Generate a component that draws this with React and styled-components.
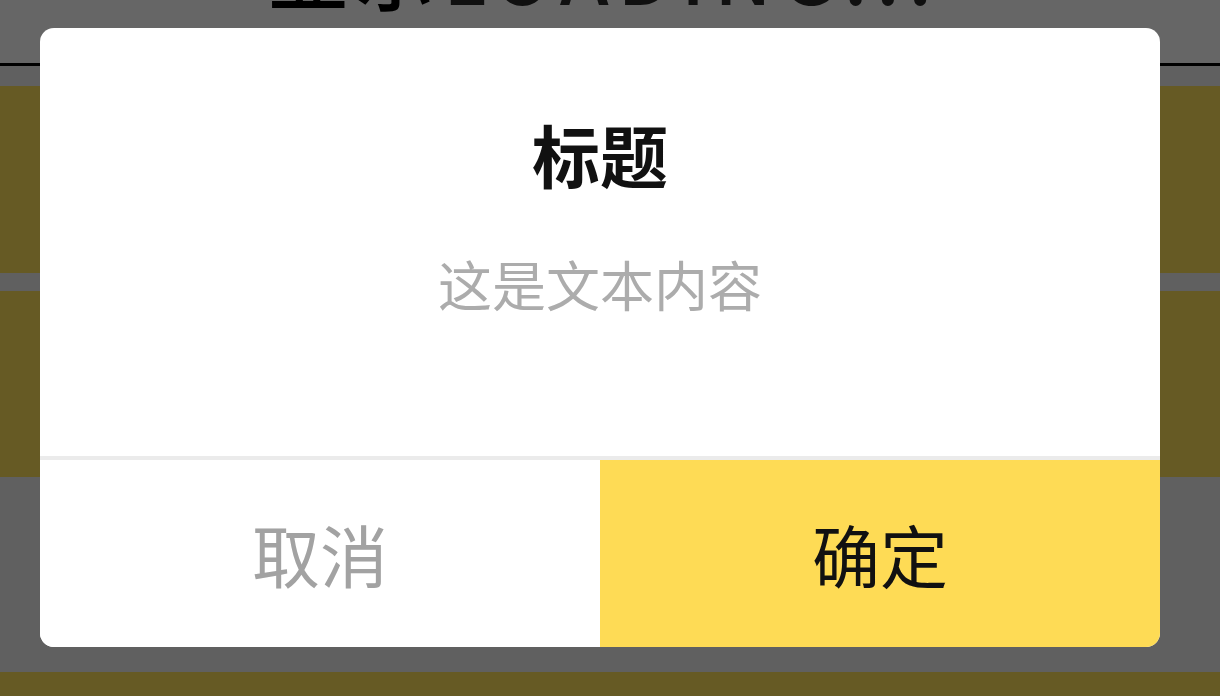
import styled, { createGlobalStyle } from 'styled-components';

const GlobalStyle = createGlobalStyle`
  html, body {
    margin: 0;
    padding: 0;
    height: 100%;
    overflow: hidden;
    background: #f0f0f0;
    font-family: "Noto Sans CJK SC", "Noto Sans", sans-serif;
  }
`;

export default function App() {
  return (
    <>
      <GlobalStyle />
      <Page>
        <Header>
          <HeaderTitle>
            显示<Latin>LOADING...</Latin>
          </HeaderTitle>
        </Header>
        <List>
          <Card $height={187} $gap={18} />
          <Card $height={186} $gap={195} />
          <Card $height={24} $gap={0} />
        </List>
      </Page>

      <Overlay>
        <Dialog>
          <Body>
            <Title>标题</Title>
            <Content>这是文本内容</Content>
          </Body>
          <Actions>
            <ActionButton>取消</ActionButton>
            <ActionButton $primary>确定</ActionButton>
          </Actions>
        </Dialog>
      </Overlay>
    </>
  );
}

// background page
const Page = styled.div`
  display: flex;
  flex-direction: column;
  height: 696px;
  overflow: hidden;
  background: #f0f0f0;
`;

const Header = styled.header`
  display: flex;
  justify-content: center;
  height: 63px;
  flex-shrink: 0;
  overflow: hidden;
  background: #fff;
  border-bottom: 3px solid #000;
`;

const HeaderTitle = styled.h1`
  margin: -68px 0 0 -10px;
  font-size: 78px;
  line-height: 78px;
  font-weight: 500;
  color: #000;
  letter-spacing: 9px;
  white-space: nowrap;
`;

const Latin = styled.span`
  color: #2a2a2a;
`;

const List = styled.div`
  display: flex;
  flex-direction: column;
  padding-top: 20px;
`;

const Card = styled.div`
  height: ${(p) => p.$height}px;
  margin-bottom: ${(p) => p.$gap}px;
  background: #ffe15a;
  flex-shrink: 0;
`;

// modal
const Overlay = styled.div`
  position: fixed;
  inset: 0;
  display: flex;
  align-items: flex-start;
  padding: 28px 60px 0 40px;
  background: rgba(0, 0, 0, 0.6);
`;

const Dialog = styled.div`
  width: 1120px;
  display: flex;
  flex-direction: column;
  background: #fff;
  border-radius: 14px;
  overflow: hidden;
`;

const Body = styled.div`
  height: 432px;
  display: flex;
  flex-direction: column;
  align-items: center;
  padding-top: 85px;
  box-sizing: border-box;
  border-bottom: 4px solid #ebebeb;
`;

const Title = styled.h2`
  margin: 0;
  font-size: 68px;
  line-height: 82px;
  font-weight: 700;
  color: #111;
`;

const Content = styled.p`
  margin: 56px 0 0;
  font-size: 54px;
  line-height: 65px;
  color: #acacac;
`;

const Actions = styled.div`
  display: grid;
  grid-template-columns: 1fr 1fr;
  height: 187px;
`;

const ActionButton = styled.button`
  border: 0;
  margin: 0;
  padding: 0;
  font-family: inherit;
  font-size: 68px;
  font-weight: 400;
  background: ${(p) => (p.$primary ? '#fedb55' : '#fff')};
  color: ${(p) => (p.$primary ? '#111' : '#a2a2a2')};
  cursor: pointer;
`;
